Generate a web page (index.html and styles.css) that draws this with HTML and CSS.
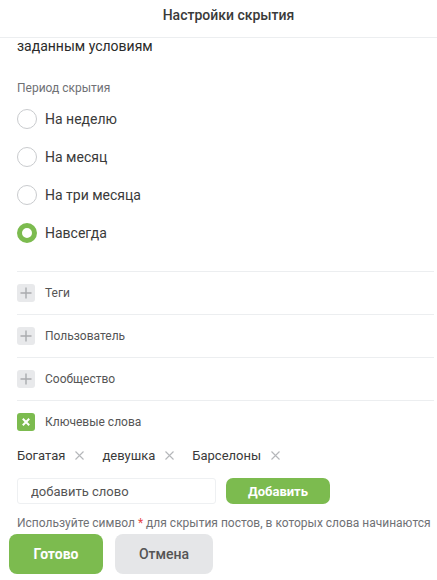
FILE: index.html
```html
<!DOCTYPE html>
<html lang="ru">
<head>
<meta charset="utf-8">
<link rel="stylesheet" href="styles.css">
</head>
<body>
<div class="dialog">
  <header class="dlg-head">Настройки скрытия</header>
  <main class="dlg-body">
    <p class="cut-text">заданным условиям</p>
    <div class="label">Период скрытия</div>
    <div class="radios">
      <label class="radio"><span class="circle"></span>На неделю</label>
      <label class="radio"><span class="circle"></span>На месяц</label>
      <label class="radio"><span class="circle"></span>На три месяца</label>
      <label class="radio"><span class="circle on"></span>Навсегда</label>
    </div>
    <div class="sections">
      <div class="sec"><span class="toggle"><svg viewBox="0 0 18 18" width="18" height="18"><path d="M9 3.5v11M3.5 9h11" stroke="#a9abae" stroke-width="1.4" fill="none"/></svg></span>Теги</div>
      <div class="sec"><span class="toggle"><svg viewBox="0 0 18 18" width="18" height="18"><path d="M9 3.5v11M3.5 9h11" stroke="#a9abae" stroke-width="1.4" fill="none"/></svg></span>Пользователь</div>
      <div class="sec"><span class="toggle"><svg viewBox="0 0 18 18" width="18" height="18"><path d="M9 3.5v11M3.5 9h11" stroke="#a9abae" stroke-width="1.4" fill="none"/></svg></span>Сообщество</div>
      <div class="sec"><span class="toggle active"><svg viewBox="0 0 18 18" width="18" height="18"><path d="M5.8 5.8l6.4 6.4M12.2 5.8l-6.4 6.4" stroke="#ffffff" stroke-width="2" fill="none"/></svg></span>Ключевые слова</div>
    </div>
    <div class="tags">
      <span class="tag">Богатая<svg class="x" viewBox="0 0 9 9" width="9" height="9"><path d="M0.5 0.5l8 8M8.5 0.5l-8 8" stroke="#b5b7ba" stroke-width="1.1" fill="none"/></svg></span>
      <span class="tag">девушка<svg class="x" viewBox="0 0 9 9" width="9" height="9"><path d="M0.5 0.5l8 8M8.5 0.5l-8 8" stroke="#b5b7ba" stroke-width="1.1" fill="none"/></svg></span>
      <span class="tag">Барселоны<svg class="x" viewBox="0 0 9 9" width="9" height="9"><path d="M0.5 0.5l8 8M8.5 0.5l-8 8" stroke="#b5b7ba" stroke-width="1.1" fill="none"/></svg></span>
    </div>
    <div class="add-row">
      <input class="word-input" type="text" placeholder="добавить слово">
      <button class="btn-add">Добавить</button>
    </div>
    <p class="hint">Используйте символ <span class="star">*</span> для скрытия постов, в которых слова начинаются</p>
  </main>
  <footer class="dlg-foot">
    <button class="btn btn-ok">Готово</button>
    <button class="btn btn-cancel">Отмена</button>
  </footer>
</div>
</body>
</html>
```

FILE: styles.css
```css
* { box-sizing: border-box; }
html, body { margin: 0; padding: 0; background: #fff; }
body {
  font-family: Roboto, "Liberation Sans", sans-serif;
  color: #222;
  width: 437px;
  height: 580px;
  overflow: hidden;
}
.dlg-head {
  height: 38px;
  line-height: 31px;
  padding-left: 20px;
  text-align: center;
  font-size: 14px;
  font-weight: 500;
  color: #3a3a3a;
  border-bottom: 1px solid #eceef0;
}
.dlg-body {
  padding: 0 3px 0 17px;
}
.cut-text {
  margin: 0;
  font-size: 14px;
  line-height: 16px;
  color: #2a2a2a;
}
.label {
  margin-top: 26px;
  font-size: 12px;
  line-height: 16px;
  color: #6f7175;
}
.radios {
  margin-top: 4px;
  display: flex;
  flex-direction: column;
}
.radio {
  height: 38px;
  display: flex;
  align-items: center;
  gap: 8px;
  font-size: 14px;
  color: #3a3a3a;
}
.circle {
  width: 20px;
  height: 20px;
  border-radius: 50%;
  border: 1px solid #c9cbce;
  background: #fff;
}
.circle.on {
  border: 5px solid #7cbb4f;
}
.sections {
  margin-top: 19px;
}
.sec {
  height: 43px;
  border-top: 1px solid #eceef0;
  display: flex;
  align-items: center;
  gap: 10px;
  font-size: 12px;
  color: #555;
}
.toggle {
  width: 18px;
  height: 18px;
  border-radius: 3px;
  background: #e8e9eb;
  display: flex;
}
.toggle.active { background: #7cbb4f; }
.tags {
  height: 24px;
  display: flex;
  align-items: center;
  gap: 18px;
  font-size: 13px;
  color: #3a3a3a;
}
.tag {
  display: flex;
  align-items: center;
  gap: 10px;
}
.add-row {
  margin-top: 11px;
  display: flex;
  align-items: center;
  gap: 10px;
}
.word-input {
  width: 199px;
  height: 26px;
  border: 1px solid #eef0f2;
  border-radius: 3px;
  padding: 0 13px;
  font-family: inherit;
  font-size: 13px;
  color: #333;
  outline: none;
}
.word-input::placeholder { color: #555; }
.btn-add {
  width: 104px;
  height: 26px;
  border: none;
  border-radius: 7px;
  background: #7cbb4f;
  color: #fff;
  font-family: inherit;
  font-weight: 700;
  font-size: 13px;
}
.hint {
  margin: 11px 0 0;
  font-size: 12px;
  line-height: 16px;
  color: #6f7175;
  white-space: nowrap;
}
.star { color: #e64646; }
.dlg-foot {
  margin-top: 3px;
  padding-left: 9px;
  display: flex;
  gap: 12px;
}
.btn {
  height: 40px;
  border: none;
  border-radius: 8px;
  font-family: inherit;
  font-size: 14px;
}
.btn-ok {
  width: 94px;
  background: #7cbb4f;
  color: #fff;
  font-weight: 700;
}
.btn-cancel {
  width: 98px;
  background: #e5e6e8;
  color: #555;
  font-weight: 500;
}
```
